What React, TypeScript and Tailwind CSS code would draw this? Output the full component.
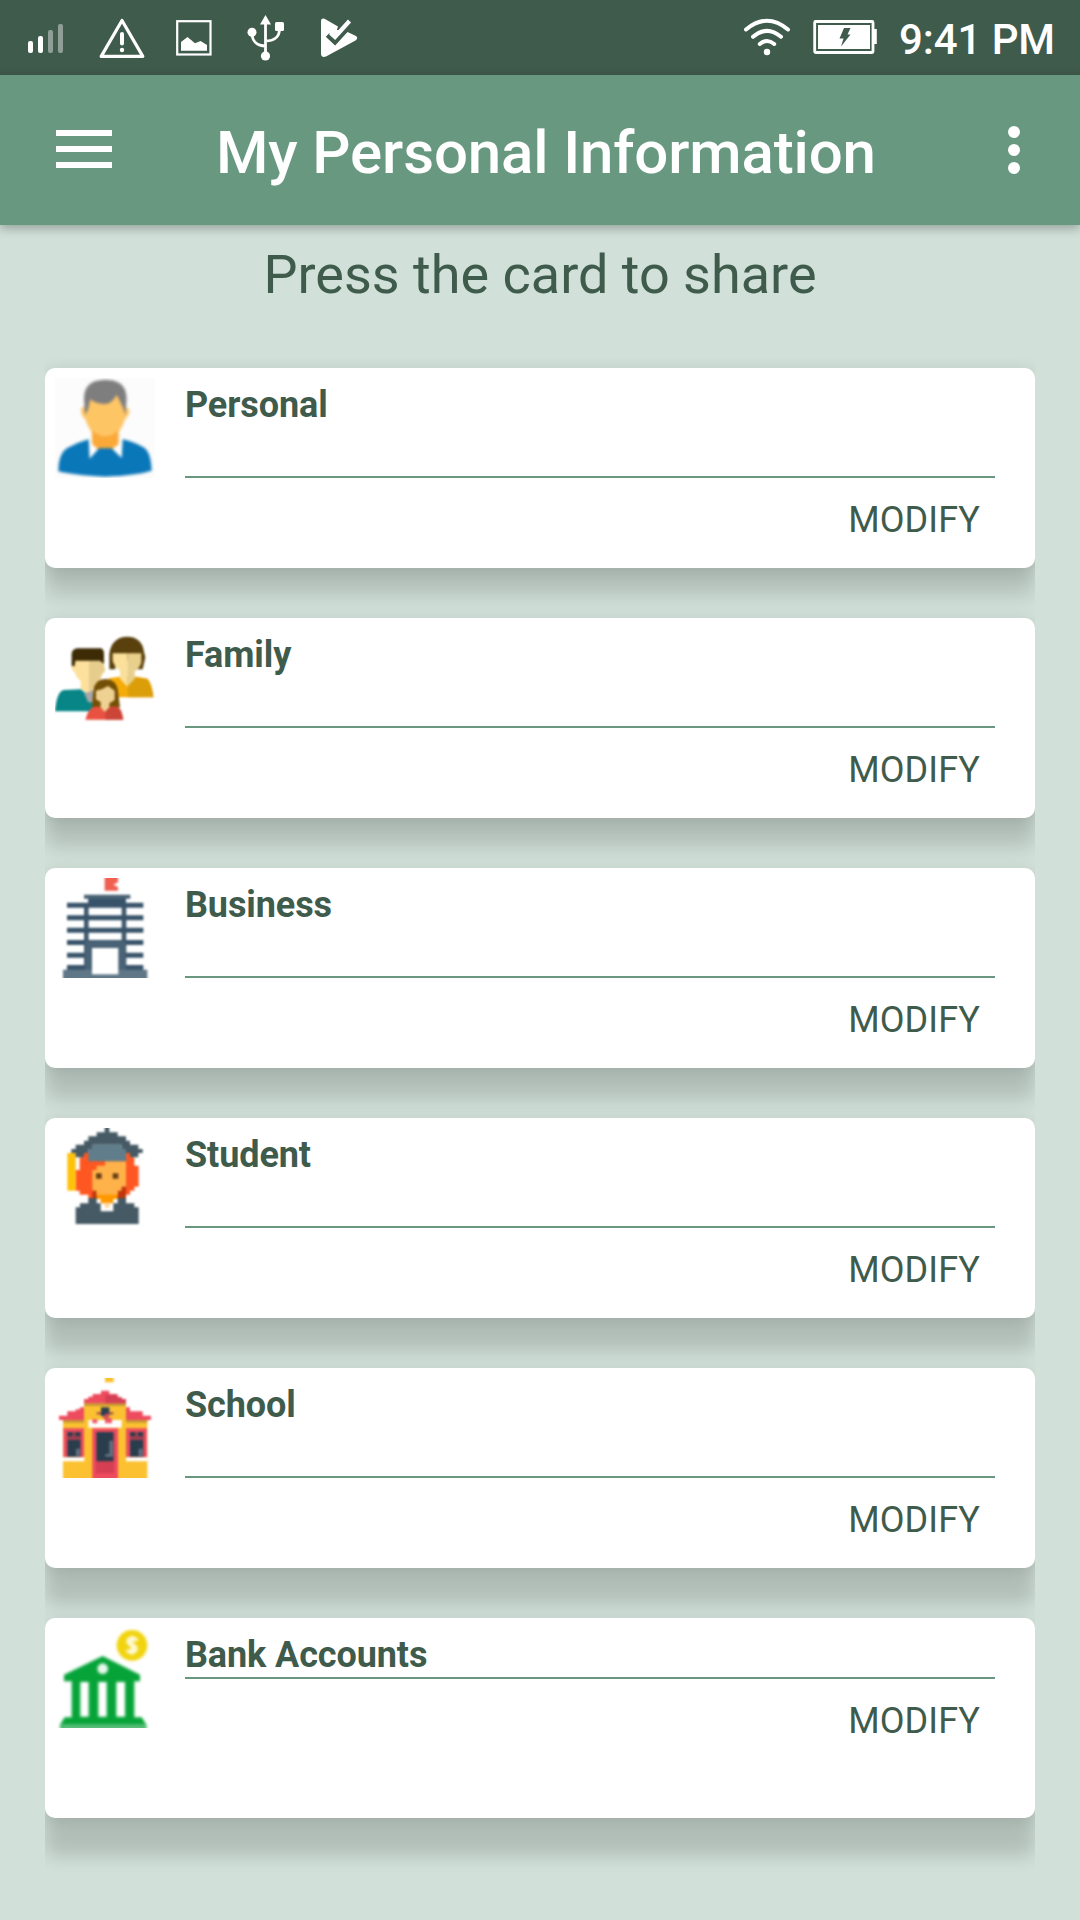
import React from "react";

function Soft({ id, d = 3.2 }: { id: string; d?: number }) {
  return (
    <filter id={id} x="-5%" y="-5%" width="110%" height="110%" colorInterpolationFilters="sRGB">
      <feGaussianBlur stdDeviation={d} />
    </filter>
  );
}

function PersonIcon() {
  return (
    <svg viewBox="45 54 300 300" className="size-25 shrink-0 overflow-hidden">
      <Soft id="s1" d={4} />
      <rect x="45" y="54" width="300" height="300" fill="#fcfcfc" />
      <g filter="url(#s1)">
        <path d="M146 238L172 268H220L246 238V300H146Z" fill="#fff" />
        <path d="M136 140C126 138 121 148 124 158Q127 172 136 177C143 200 152 210 158 222V250L174 268H216L232 250V222C240 210 248 200 256 176Q265 170 268 158Q270 144 258 142L240 92H150Z" fill="#fec565" />
        <path d="M156 210Q195 248 236 210V252L214 270H176L156 252Z" fill="#faa938" />
        <path d="M135 164L132 118C132 78 152 60 196 59C242 60 260 80 260 118L256 166L248 140L230 104Q214 134 192 132Q164 130 151 118L144 150Z" fill="#7e7e7e" />
        <path d="M55 334C56 292 66 274 82 264Q110 248 146 238L149 296L177 265H215L245 294L248 238Q284 246 314 264C328 276 334 300 335 332Q290 346 195 350Q100 346 55 334Z" fill="#0a77b9" />
      </g>
    </svg>
  );
}

function FamilyIcon() {
  return (
    <svg viewBox="45 54 300 300" className="size-25 shrink-0 overflow-hidden">
      <Soft id="s2" d={3.6} />
      <g filter="url(#s2)">
        <path d="M208 178V132C212 98 232 80 262 80C292 80 310 98 312 126L316 142L308 178H292V150H226V178Z" fill="#59400d" />
        <path d="M206 262V205L240 200H290L322 206Q334 216 338 262Z" fill="#f5ab08" />
        <path d="M264 220L290 202L322 206Q336 218 341 262H264Z" fill="#dc9e08" />
        <path d="M218 130H262V230L240 206V182Q222 168 218 152Z" fill="#fbe09b" />
        <path d="M262 130H304V158Q298 176 284 184V206L262 230Z" fill="#e8cf8c" />
        <path d="M45 304Q50 244 72 240L122 238L148 258L176 240V304Z" fill="#078587" />
        <path d="M132 248L160 240V278L144 276Z" fill="#a7a7a7" />
        <path d="M96 150H146V248L122 238V212Q108 204 106 190L95 178Z" fill="#fde09b" />
        <path d="M146 146H190V160L196 180L186 194L176 218L158 240L146 248Z" fill="#e7cd8b" />
        <path d="M95 168V130Q98 116 112 115H184Q192 120 192 132V162L180 152H106L104 168Z" fill="#3d2b05" />
        <path d="M156 292L160 242Q164 208 196 207Q230 208 234 244L240 292Z" fill="#745006" />
        <path d="M136 329Q146 290 166 290H232Q244 294 250 329Z" fill="#ea5140" />
        <path d="M196 290H232Q244 294 250 329H196Z" fill="#cc4638" />
        <path d="M168 242Q184 240 204 228L224 242V270L208 280V292L194 306L182 292V276L168 268Z" fill="#efd293" />
      </g>
    </svg>
  );
}

function BusinessIcon() {
  return (
    <svg viewBox="45 54 300 300" className="size-25 shrink-0 overflow-hidden">
      <Soft id="s3" d={3.3} />
      <g filter="url(#s3)">
        <path d="M194 40H234V67L220 74L234 81V92H194Z" fill="#f05f50" />
        <path d="M132 104H271V116H258V140H145V116H132Z" fill="#4a6274" />
        <path d="M145 116H257V138H145Z" fill="#36536a" />
        <path d="M132 130H146V330H132ZM245 130H259V330H245Z" fill="#40596c" />
        <path d="M81 128H310V143H81ZM81 166H310V181H81ZM81 203H310V218H81ZM81 240H310V255H81ZM81 278H310V293H81ZM81 315H310V330H81Z" fill="#38536a" />
        <path d="M135 243H257V330H135Z" fill="#496275" />
        <path d="M69 329H322V370H69Z" fill="#607788" />
        <path d="M156 264H235V343H156Z" fill="#fff" />
      </g>
    </svg>
  );
}

function StudentIcon() {
  return (
    <svg viewBox="45 54 300 300" className="size-25 shrink-0 overflow-hidden">
      <Soft id="s4" d={2.8} />
      <g filter="url(#s4)">
        <path d="M119 142H132V129H270V142H283V167H296V230H283V242H270V254H258V267H145V254H119V242H107V180H119Z" fill="#ff5722" />
        <path d="M82 129H107V242H82Z" fill="#ffc20a" />
        <path d="M157 180H170V167H195V154H258V230H245V254H170V242H157Z" fill="#ffb24a" />
        <path d="M157 242H170V254H233V242H245V230H258V267H157Z" fill="#bf360c" />
        <path d="M170 240H233V267H220V280H207V292H195V280H182V267H170Z" fill="#ff9800" />
        <path d="M170 236H233V254H170Z" fill="#ffb24a" />
        <path d="M194 40H208V67H233V79H258V92H270V104H295V117H308V129H295V142H270V129H245V104H158V117H145V129H132V142H107V129H94V117H107V104H132V92H145V79H170V67H194Z" fill="#455a64" />
        <path d="M157 104H245V117H258V154H145V117H157Z" fill="#607d8b" />
        <path d="M145 264H170V280H182V304H220V280H233V264H258V280H283V292H296V342H107V292H120V280H145Z" fill="#455a64" />
        <path d="M194 278H209V292H194Z" fill="#ffd59a" />
        <path d="M168 190H185V206H168ZM218 190H235V206H218Z" fill="#6b4014" />
      </g>
    </svg>
  );
}

function SchoolIcon() {
  return (
    <svg viewBox="45 54 300 300" className="size-25 shrink-0 overflow-hidden">
      <Soft id="s5" d={3} />
      <g filter="url(#s5)">
        <path d="M195 40H221V67H195Z" fill="#fbc02d" />
        <path d="M69 175H132V128H258V175H322V370H69Z" fill="#fbc130" />
        <path d="M69 178H132V188H69ZM258 178H322V188H258ZM132 130H258V138H132Z" fill="#c69a35" />
        <path d="M132 117H145V110H158V102H183V92H208V102H233V112H245V117H258V130H132ZM57 167H82V154H107V148H120V142H132V180H57ZM258 142H270V154H308V167H333V180H258Z" fill="#ee4b5e" />
        <path d="M196 104H232V112H245V117H258V130H196Z" fill="#d53f53" />
        <path d="M145 180H245V203H145Z" fill="#fff" />
        <path d="M157 178H172V190H157ZM195 174H216V190H195Z" fill="#f1596a" />
        <path d="M170 156H220V164H170Z" fill="#b35a4c" />
        <path d="M183 142H208V168H183Z" fill="#2c3e50" />
        <path d="M188 168L206 158V178H192Z" fill="#d54f5d" />
        <path d="M70 205H132V292H70ZM258 205H321V292H258ZM157 205H234V370H157Z" fill="#ee4b5e" />
        <path d="M168 304H222V340H168Z" fill="#d63e54" />
        <path d="M82 216H122V290H82ZM270 216H310V290H270ZM169 216H221V304H169Z" fill="#2a3d4d" />
        <path d="M82 229H122V240H82ZM270 229H310V240H270ZM98 216H106V234H98ZM286 216H294V234H286Z" fill="#a33f50" />
        <path d="M108 266H120V288H108ZM296 266H308V288H296ZM208 242H219V290H196V282H208Z" fill="#617080" />
        <path d="M69 292H133V304H69ZM258 292H322V304H258Z" fill="#fff" />
      </g>
    </svg>
  );
}

function BankIcon() {
  return (
    <svg viewBox="45 84 300 300" className="size-25 shrink-0 overflow-hidden">
      <Soft id="s6" d={4} />
      <g filter="url(#s6)">
        <circle cx="276" cy="136" r="46" fill="#f1d40f" />
        <path d="M292 122Q284 112 273 115Q260 119 265 129Q270 135 280 137Q293 142 286 153Q276 162 260 151M276 108V164" fill="none" stroke="#fffbe0" strokeWidth="10" />
        <path d="M188 168L300 224V244H283V352H305L319 374V400H60V374L74 352H95V244H72V224Z" fill="#06a438" />
        <path d="M121 246H146V350H121ZM175 246H200V350H175ZM229 246H255V350H229Z" fill="#fff" />
        <circle cx="188" cy="206" r="16" fill="#e9f8ed" />
        <path d="M62 373H319V400H62Z" fill="#57bd78" />
      </g>
    </svg>
  );
}

type CardData = { title: string; Icon: () => React.ReactElement; body: string; shadow: string };

const cards: CardData[] = [
  { title: "Personal", Icon: PersonIcon, body: "h-[110px]", shadow: "shadow-[0_27px_20px_rgba(0,0,0,0.145),0_3px_16px_rgba(0,0,0,0.12)]" },
  { title: "Family", Icon: FamilyIcon, body: "h-[110px]", shadow: "shadow-[0_29px_19px_rgba(0,0,0,0.145),0_3px_16px_rgba(0,0,0,0.12)]" },
  { title: "Business", Icon: BusinessIcon, body: "h-[110px]", shadow: "shadow-[0_31px_19px_rgba(0,0,0,0.148),0_3px_16px_rgba(0,0,0,0.11)]" },
  { title: "Student", Icon: StudentIcon, body: "h-[110px]", shadow: "shadow-[0_33px_18px_rgba(0,0,0,0.15),0_3px_16px_rgba(0,0,0,0.11)]" },
  { title: "School", Icon: SchoolIcon, body: "h-[110px]", shadow: "shadow-[0_36px_18px_rgba(0,0,0,0.15),0_3px_16px_rgba(0,0,0,0.1)]" },
  { title: "Bank Accounts", Icon: BankIcon, body: "h-[61px]", shadow: "shadow-[0_38px_18px_rgba(0,0,0,0.15),0_3px_16px_rgba(0,0,0,0.1)]" },
];

function Card({ title, Icon, body, shadow }: CardData) {
  return (
    <section className={`flex h-[200px] gap-[30px] rounded-[10px] bg-white pr-10 pl-2.5 ${shadow}`}>
      <div className="pt-2.5">
        <Icon />
      </div>
      <div className="flex flex-1 flex-col">
        <div className={`border-b-2 border-[#689980] pt-[15px] ${body}`}>
          <h2 className="text-[36px] leading-[44px] font-bold tracking-[-0.1px]">{title}</h2>
        </div>
        <button className="mt-5 self-end pr-[15px] text-[36px] leading-[44px] tracking-[0.12px]">MODIFY</button>
      </div>
    </section>
  );
}

function StatusBar() {
  return (
    <div className="flex h-[75px] items-center justify-between bg-[#3f5b4c] text-white">
      <svg viewBox="0 0 380 75" className="h-[75px] w-[380px]" fill="#fff">
        <rect x="28" y="41" width="5" height="12" rx="2" />
        <rect x="38" y="36" width="5" height="17" rx="2" />
        <rect x="48" y="30" width="5" height="23" rx="2" opacity=".42" />
        <rect x="58" y="24" width="5" height="29" rx="2" opacity=".42" />
        <path d="M122 20.5L142.800 56.400H101.200Z" fill="none" stroke="#fff" strokeWidth="3.2" strokeLinejoin="round" />
        <path d="M122 34V43.500" stroke="#fff" strokeWidth="4" strokeLinecap="round" />
        <circle cx="122" cy="50" r="2.200" />
        <rect x="177.200" y="21.200" width="33.300" height="33.300" fill="none" stroke="#fff" strokeWidth="2.200" />
        <path d="M181 42L187.500 37L195 43.300L200.500 41L207 45V50.700H181Z" />
        <path d="M265.500 15L271 24.500H260Z" />
        <path d="M265.500 22V54M252 33C252 41 257 46 265.500 46M279.500 29C279.500 37 274 41 265.500 41" fill="none" stroke="#fff" strokeWidth="2.800" />
        <circle cx="252" cy="32.300" r="4.500" />
        <circle cx="265.500" cy="56" r="4.600" />
        <rect x="275" y="22" width="9" height="9" rx="1.500" />
        <path d="M321 21Q321 18 324.500 18.700L338 26.500L335 36L332 33L327 37.500L335 45L347.500 32L355.500 35.800Q359 38 355.500 40.500L326 56.500Q321 58 321 53.500Z" />
        <path d="M321 30H345L335 45L327 37L321 42Z" />
        <path d="M327.500 35L335 42L349 26" fill="none" stroke="#3f5b4c" strokeWidth="5" />
        <path d="M330.500 33L335 37L349.500 21" fill="none" stroke="#fff" strokeWidth="4.200" />
      </svg>
      <div className="flex items-center pr-[26px]">
        <svg viewBox="740 0 150 75" className="h-[75px] w-[150px]" fill="#fff">
          <path d="M746 29.500Q767 12 788 29.500M753 36.800Q767 24.800 781 36.800M759.800 44Q767 38 774.200 44" fill="none" stroke="#fff" strokeWidth="4" strokeLinecap="round" />
          <circle cx="767" cy="52" r="3.200" />
          <rect x="814.700" y="21.500" width="58.300" height="31" rx="1" fill="none" stroke="#fff" strokeWidth="2.800" />
          <rect x="818" y="25" width="52" height="24" />
          <path d="M874 29H876.800V44H874Z" />
          <path d="M844 28H850.500L847.500 34.500H850.500L841 46.500L843.500 38.500H839.500Z" fill="#3f5b4c" />
        </svg>
        <span className="w-[164px] pt-1 pl-[9px] text-[42px] font-medium tracking-[-0.1px] whitespace-nowrap">9:41 PM</span>
      </div>
    </div>
  );
}

export default function App() {
  return (
    <div className="h-[1920px] w-[1080px] overflow-hidden bg-[#d1e0d9] font-['Roboto',sans-serif] text-[#3f5b4c]">
      <StatusBar />
      <header className="relative z-10 flex h-[150px] items-center bg-[#689980] pr-[60px] pl-14 text-white shadow-[0_3px_10px_rgba(0,0,0,0.3)]">
        <button aria-label="Menu" className="flex w-14 flex-col gap-2.5 pb-0.5">
          <span className="h-1.5 bg-white" />
          <span className="h-1.5 bg-white" />
          <span className="h-1.5 bg-white" />
        </button>
        <h1 className="flex-1 pt-[5px] pl-[104px] text-[60px] leading-[70px] font-medium tracking-[-0.14px] whitespace-nowrap">My Personal Information</h1>
        <button aria-label="More options" className="flex w-3 flex-col gap-1.5">
          <span className="size-3 rounded-full bg-white" />
          <span className="size-3 rounded-full bg-white" />
          <span className="size-3 rounded-full bg-white" />
        </button>
      </header>
      <p className="h-[143px] pt-[18px] text-center text-[54px] leading-[64px]">Press the card to share</p>
      <main className="mx-[45px] flex flex-col gap-[50px] overflow-x-clip">
        {cards.map((c) => (
          <Card key={c.title} {...c} />
        ))}
      </main>
    </div>
  );
}
